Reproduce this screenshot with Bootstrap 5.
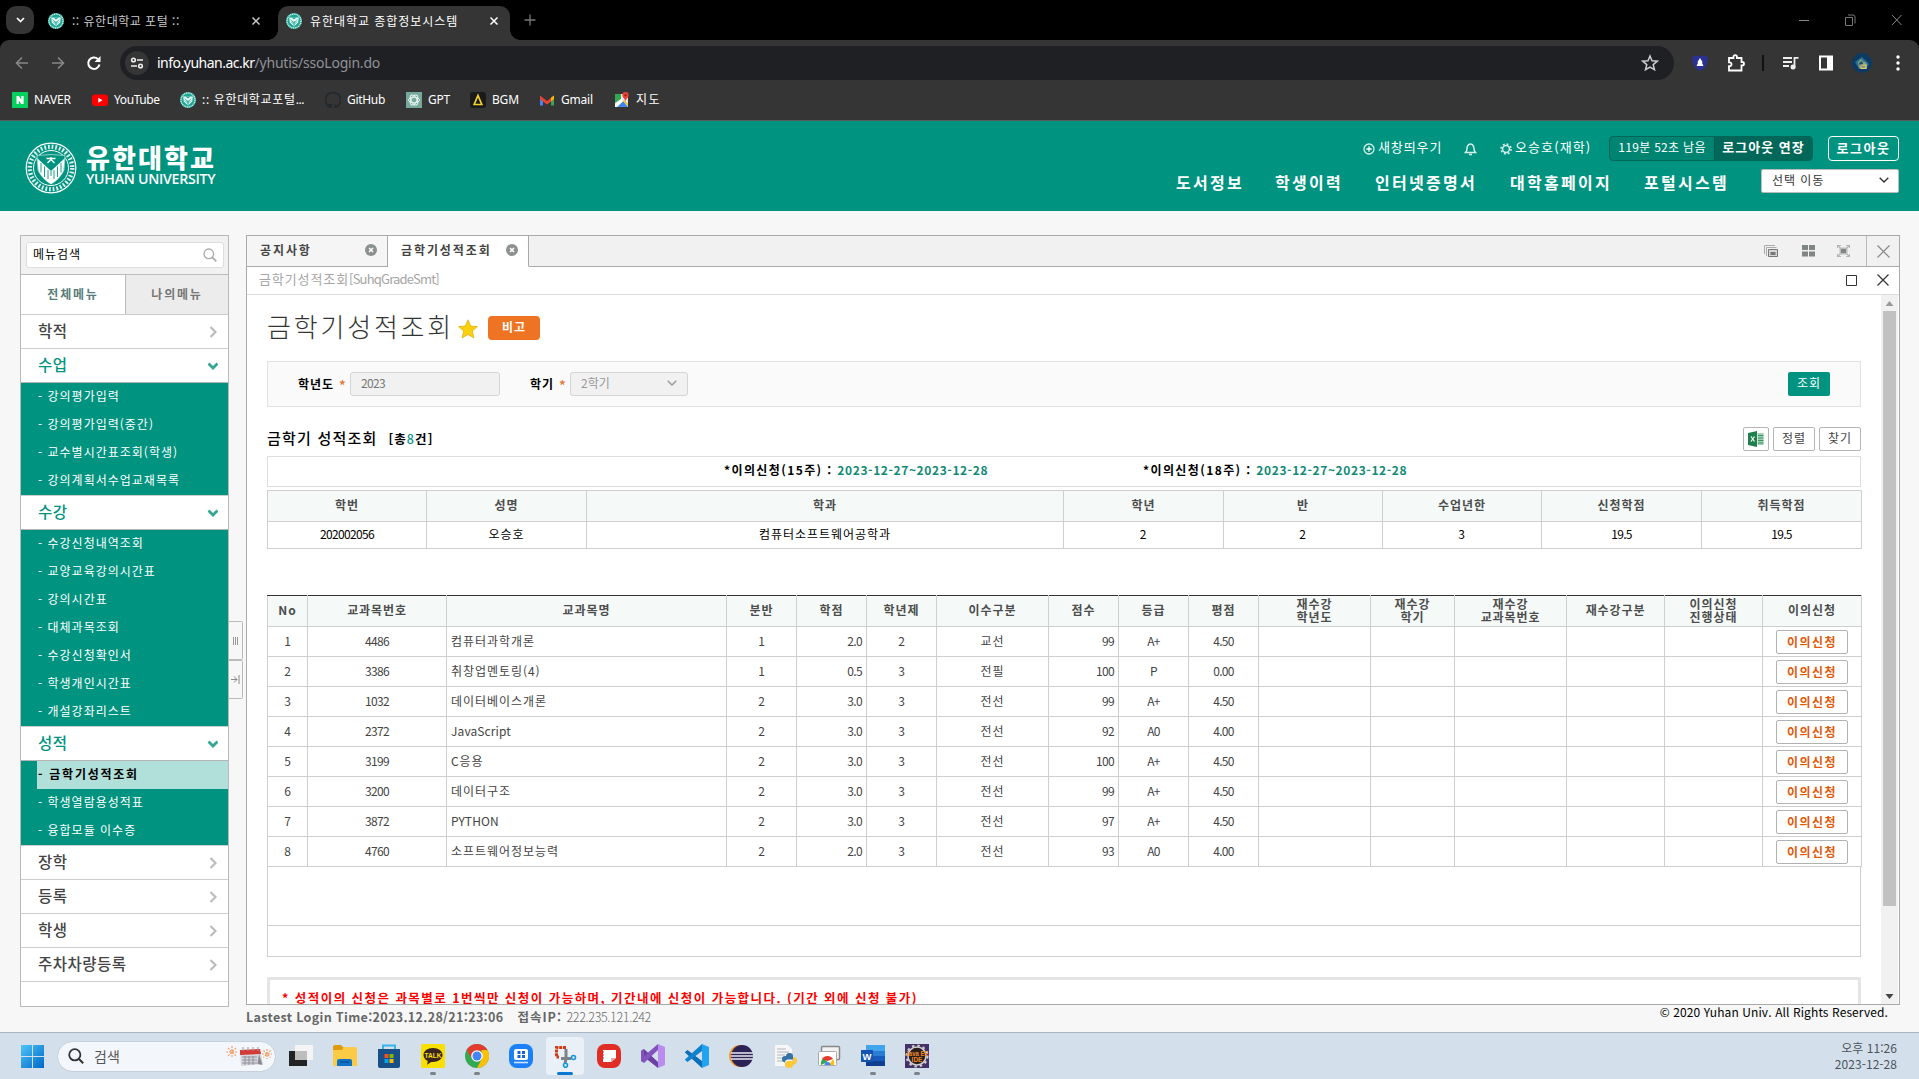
<!DOCTYPE html>
<html lang="ko">
<head>
<meta charset="utf-8">
<title>유한대학교 종합정보시스템</title>
<link href="https://cdn.jsdelivr.net/npm/bootstrap@5.3.0/dist/css/bootstrap.min.css" rel="stylesheet">
<style>
:root{--teal:#009380;--line:#cfcfcf;}
*{box-sizing:border-box}
body{width:1919px;height:1079px;overflow:hidden;background:#f7f7f7;font-family:"Noto Sans CJK KR",sans-serif;font-size:12px;line-height:1.2;color:#000;white-space:nowrap}
svg{display:block;flex:none}
.k{letter-spacing:.95px}
.n{letter-spacing:-.65px}
/* browser */
.tabstrip{height:40px;background:#000;color:#c9c9c9}
.tabmenu{width:28px;height:28px;border-radius:10px;background:#353535;margin:6px 14px 0 6px}
.btab{height:34px;margin-top:6px;padding:0 11px 4px 8px}
.btab .ttl{flex:1;margin-left:8px}
.btab-on{background:#353535;border-radius:10px 10px 0 0;color:#fff;position:relative}
.btab-on:before,.btab-on:after{content:"";position:absolute;bottom:0;width:10px;height:10px}
.btab-on:before{left:-10px;background:radial-gradient(circle at 0 0,#000 9.5px,#353535 10px)}
.btab-on:after{right:-10px;background:radial-gradient(circle at 100% 0,#000 9.5px,#353535 10px)}
.chrome-bg{background:#000}
.chrome-bars{background:#353535;height:81px;border-radius:9px 9px 0 0;border-bottom:1px solid #5c5c5c}
.toolbar{height:46px;padding-left:12px}
.omni{height:34px;border-radius:17px;background:#1f2024;width:1554px;padding:0 14px 0 5px;font-family:"Noto Sans",sans-serif;font-size:14px;letter-spacing:-.22px;color:#8f9296}
.omni b{font-weight:400;color:#fff;letter-spacing:-.5px}
.siteinfo{width:24px;height:24px;border-radius:50%;background:#353535;margin-right:8px}
.marks{height:28px;padding-left:12px;color:#fff;font-family:"Noto Sans","Noto Sans CJK KR",sans-serif}
.bm{gap:6px;letter-spacing:-.2px}
/* portal header */
.hd{height:90px;background:var(--teal);color:#fff}
.uni-ko{font-size:26px;font-weight:900;line-height:28px;letter-spacing:2.1px}
.uni-en{font:600 14.2px/16px "Open Sans",sans-serif;letter-spacing:-.3px}
.hd-top{height:25px;margin-top:15px}
.tmr{width:204px;height:25px;border:1px solid #00665a;border-radius:4px;background:#008472;overflow:hidden}
.tmr span:last-child{background:#006759;border-left:1px solid #005a4e}
.lgout{width:71px;height:25px;border:1px solid #fff;border-radius:4px;font-size:13px}
.gnb{font-size:16px;font-weight:700;letter-spacing:2.3px}
.gnb>span{padding-top:3px}
.hsel{width:138px;height:24px;background:#fff;border:1px solid #bbb;border-radius:2px;color:#333;padding:0 9px 2px 10px}
/* side menu */
.side{width:209px;height:772px;border:1px solid #b9b9b9;background:#fff}
.side-srch{height:39px;background:#f1f1f1;border-bottom:1px solid #bbb;padding:6px 4px 5px 5px}
.side-srch>div{height:26px;border:1px solid #ddd;border-radius:3px;background:#fff;padding:0 6px 1px 6px}
.side-tabs{height:39px;font-weight:600;color:#557d79}
.side-tabs>div{padding-bottom:1px}
.side-tabs>div+div{background:#ececec;border-left:1px solid #bbb;color:#777}
.mi{height:34px;border-top:1px solid #cdcdcd;padding:0 11px 3px 17px;font-size:15.5px;font-weight:500;color:#444;letter-spacing:.5px}
.mi svg{position:relative;top:2px}
.mi.op{height:35px;border-bottom:1px solid #b5b5b5;color:var(--teal);padding-right:10px}
.sub{background:var(--teal);color:#fff;padding-left:16px}
.sub div{height:28px;line-height:26px;padding-left:1px;letter-spacing:1px}
.sub .cur{background:#b1dfd9;color:#000;font-weight:700;letter-spacing:1.75px}
.hnd{width:14px;height:39px;border:1px solid #bbb;border-left:0;background:#f7f7f7;border-radius:0 2px 2px 0}
/* work area */
.work{width:1654px;height:770px;border:1px solid #aaa;background:#fff;overflow:hidden}
.wtabs{height:31px;background:#f1f1f1}
.wtab{height:31px;width:141px;border-right:1px solid #a9a9a9;border-bottom:1px solid #a9a9a9;padding:0 10px 2px 13px;background:#f5f5f5;font-weight:600;color:#444;letter-spacing:1.9px}
.wtab.on{background:#fff;border-bottom-color:#fff}
.wfill{border-bottom:1px solid #aaa;height:31px}
.crumb{height:28px;border-bottom:1px solid #ddd;color:#a5a5a5;font-size:13px;padding:0 10px 3px 12px}
.crumb svg{position:relative;top:1px}
.scr{width:17px;height:709px;background:#f1f1f1}
.scr .thumb{width:13px;height:595px;background:#c1c1c1;margin:0 auto}
.body{padding:0 20px 0 20px;width:1634px}
.ptitle{font-size:26px;font-weight:300;color:#333;letter-spacing:2.8px;line-height:30px;padding-bottom:2px}
.bigo{width:52px;height:24px;border-radius:4px;background:#ee7423;color:#fff;font-weight:700;letter-spacing:1px}
.filt{height:46px;border:1px solid #e2e2e2;background:#fafafa;padding:0 30px}
.fin{height:24px;border:1px solid #d5d5d5;border-radius:3px;background:#f1f1f1;color:#777;padding:0 10px 2px}
.req{color:#e8742c;font-size:14px;font-weight:500;margin:0 6px 0 5px;width:5px;padding-top:3px}
.go{width:42px;height:24px;background:var(--teal);color:#fff;border-radius:2px;padding-bottom:2px}
.sbtn{height:24px;width:42px;border:1px solid #b5b5b5;border-radius:2px;background:#fff;color:#444;padding-bottom:2px}
.per{height:31px;border:1px solid #ddd;font-weight:700;margin-top:5px;padding-bottom:2px;letter-spacing:1.4px}
.per i{font-style:normal;font-weight:600;color:#118a76;letter-spacing:.6px}
.grd{border-collapse:collapse;table-layout:fixed;width:1594px;text-align:center;color:#444;margin:0}
.grd th,.grd td{border:1px solid #cfcfcf;padding:0 4px 2px;vertical-align:middle}
.grd th{background:#f5faf9;font-weight:600;color:#4d4d4d;letter-spacing:.9px}
.g1{margin-top:3px}.g1 th{height:31px}.g1 td{height:27px;color:#000;letter-spacing:.95px}
.g1 .n{letter-spacing:-.65px}
.g2 th{height:31px;border-top:1px solid #333;line-height:13.5px;padding:0 0 2px}
.g2 td{height:30px;padding-bottom:1px}
.g2 .nm{text-align:left;letter-spacing:.95px;padding-left:4px}
.obj{width:72px;height:24px;border:1px solid #b2b2b2;border-radius:2px;color:#e05a0c;font-weight:600;letter-spacing:1.4px;margin:0 auto;background:#fff;position:relative;top:1px}
.rest{height:90px;border:1px solid #cfcfcf;border-top:0}
.rest>div{height:59px;border-bottom:1px solid #cfcfcf}
.warn{margin-top:20px;border:3px solid #e5e5e5;height:60px;color:#f00;font-weight:700;padding:10px 12px;font-size:12.5px;letter-spacing:1.46px}
.foot{padding:0 31px 0 246px;height:27px}
/* taskbar */
.task{height:47px;background:#d3e0ec;border-top:1px solid #a9b5c2;padding:0 22px 0 21px}
.pill{width:219px;height:31px;border-radius:16px;background:#f3f7fb;border:1px solid #c4d0dc;margin:0 6px 0 13px;padding:0 3px 0 10px;color:#555;font-size:14px}
.app{width:38px;height:38px;margin-right:6px;border-radius:4px;position:relative}
.app.on{background:#e9f0f7}
.app.run:after,.app.on:after{content:"";position:absolute;left:16px;bottom:0;width:6px;height:3px;border-radius:2px;background:#7b8187}
.app.on:after{left:11px;width:16px;background:#0878d4}
.clk{color:#4b5358;line-height:16.5px;text-align:right;font-size:12px;letter-spacing:.05px}
</style>
</head>
<body>
<svg width="0" height="0" style="position:absolute">
<symbol id="yh" viewBox="0 0 16 16"><circle cx="8" cy="8" r="8" fill="#1fa592"/><circle cx="8" cy="8" r="7" fill="none" stroke="#cfeeea" stroke-width="1.300" stroke-dasharray="1.200 .6"/><path d="M3.200 4.500h9.600l-.6 5L8 13.600 3.800 9.500z" fill="#eafaf7"/><path d="M5.500 4.500 8 6.500l2.500-2z" fill="#1fa592"/><path d="M8 8v5M4.800 6.500l3 3.500 3.400-3.500M5 8.500l3 3 3-3" stroke="#1fa592" fill="none" stroke-width=".8"/></symbol>
<symbol id="xx" viewBox="0 0 10 10"><path d="M1.500 1.500l7 7M8.500 1.500l-7 7" stroke="currentColor" stroke-width="1.500"/></symbol>
<symbol id="cx" viewBox="0 0 12 12"><circle cx="6" cy="6" r="6" fill="#8b918f"/><path d="M4 4l4 4M8 4L4 8" stroke="#fff" stroke-width="1.600"/></symbol>
<symbol id="gt" viewBox="0 0 8 12"><path d="M1.500 1l5 5-5 5" fill="none" stroke="#bcbcbc" stroke-width="2.200"/></symbol>
<symbol id="dn" viewBox="0 0 10 8"><path d="M.5 1.500 5 6l4.500-4.500" fill="none" stroke="#35a594" stroke-width="2.800"/></symbol>
<symbol id="cv" viewBox="0 0 10 6"><path d="M.7.700 5 5 9.300.700" fill="none" stroke="currentColor" stroke-width="1.400"/></symbol>
</svg>

<div class="tabstrip d-flex">
  <div class="tabmenu d-flex align-items-center justify-content-center text-white"><svg width="9" height="6"><path d="M1 1l3.500 3.500L8 1" fill="none" stroke="#fff" stroke-width="1.700"/></svg></div>
  <div class="btab d-flex align-items-center" style="width:230px;padding-left:0"><svg width="16" height="16"><use href="#yh"/></svg><span class="ttl" style="letter-spacing:.5px">:: 유한대학교 포털 ::</span><svg width="10" height="10" style="margin-right:6px"><use href="#xx"/></svg></div>
  <div class="btab btab-on d-flex align-items-center" style="width:232px"><svg width="16" height="16"><use href="#yh"/></svg><span class="ttl k">유한대학교 종합정보시스템</span><svg width="10" height="10"><use href="#xx"/></svg></div>
  <svg width="12" height="12" style="margin:14px 0 0 14px"><path d="M6 .5v11M.5 6h11" stroke="#777" stroke-width="1.300"/></svg>
  <div class="ms-auto d-flex" style="padding:14px 17px 0 0;gap:35px">
    <svg width="11" height="12"><path d="M0 6.500h10" stroke="#888"/></svg>
    <svg width="11" height="12"><path d="M.5 3.500h7v8h-7zM3 1h5q2 0 2 2v6.500" fill="none" stroke="#777"/></svg>
    <svg width="11" height="12"><path d="M1 1l9.500 10M10.500 1 1 11" stroke="#888"/></svg>
  </div>
</div>
<div class="chrome-bg"><div class="chrome-bars">
  <div class="toolbar d-flex align-items-center">
    <svg width="20" height="20"><path d="M16 10H5M10 4.500 4.500 10l5.500 5.500" fill="none" stroke="#888" stroke-width="1.600"/></svg>
    <svg width="20" height="20" style="margin-left:16px"><path d="M4 10h11M10 4.500l5.500 5.500-5.500 5.500" fill="none" stroke="#888" stroke-width="1.600"/></svg>
    <svg width="20" height="20" style="margin:0 16px"><path d="M15.500 11.500A5.700 5.700 0 1 1 13.800 6" fill="none" stroke="#fff" stroke-width="2"/><path d="M16.500 3v6h-6z" fill="#fff"/></svg>
    <div class="omni d-flex align-items-center">
      <span class="siteinfo d-flex align-items-center justify-content-center"><svg width="14" height="12"><g fill="none" stroke="#eee" stroke-width="1.600"><circle cx="3.500" cy="3" r="1.800"/><path d="M7 3h6M1 9h6"/><circle cx="10.500" cy="9" r="1.800"/></g></svg></span>
      <span><b>info.yuhan.ac.kr</b>/yhutis/ssoLogin.do</span>
      <svg class="ms-auto" width="18" height="18" style="margin-right:1px"><path d="M9 2l2 4.800 5.200.4-4 3.400 1.300 5.100L9 13l-4.500 2.700 1.300-5.100-4-3.400L7 6.800z" fill="none" stroke="#ccc" stroke-width="1.500"/></svg>
    </div>
    <div class="d-flex align-items-center" style="margin-left:17px">
      <svg width="18" height="16"><path d="M1 2q8-3 16 0 0 10-8 14Q1 12 1 2z" fill="#2a3193"/><path d="M9 3l2.500 4-.5 1 1.500 3h-7L7 8l-.5-1z" fill="#fff"/></svg>
      <svg width="20" height="20" style="margin-left:17px"><path d="M3 5h4.500V3.800a1.700 1.700 0 0 1 3.400 0V5H15.500v4h.8a1.700 1.700 0 0 1 0 3.400h-.8V17.500H3v-4.300h.6a1.900 1.900 0 0 0 0-3.800H3z" fill="none" stroke="#fff" stroke-width="1.800"/></svg>
      <span style="width:2px;height:16px;background:#111;margin:0 18px 0 16px"></span>
      <svg width="18" height="16"><path d="M1 3h9M1 7h9M1 11h6" stroke="#eee" stroke-width="1.800"/><path d="M12.500 12.500V2.800h4" stroke="#eee" stroke-width="1.800" fill="none"/><circle cx="11" cy="12" r="2.500" fill="#eee"/></svg>
      <svg width="16" height="16" style="margin-left:18px"><path d="M2 1.500h12v13H2z" fill="none" stroke="#fff" stroke-width="2"/><path d="M9 1h5v14H9z" fill="#fff"/></svg>
      <svg width="20" height="20" style="margin-left:18px"><circle cx="10" cy="10" r="10" fill="#0d3a63"/><path d="M3 9l4-3 3-2 4 4 3 3-3 5H7z" fill="#2b6f92"/><path d="M6 9l3-3 3 3 2 0 1 6H7z" fill="#7fa07a"/><path d="M7 10l3-2 1 3-2 4z" fill="#1c4e73"/><path d="M9 12h5v3.500H9z" fill="none" stroke="#e6ca74" stroke-width="1.200"/></svg>
      <svg width="4" height="16" style="margin-left:24px"><circle cx="2" cy="2" r="1.700" fill="#fff"/><circle cx="2" cy="8" r="1.700" fill="#fff"/><circle cx="2" cy="14" r="1.700" fill="#fff"/></svg>
    </div>
  </div>
  <div class="marks d-flex align-items-center">
    <div class="bm d-flex align-items-center" style="width:80px"><svg width="16" height="16"><path d="M0 0h16v16H0z" fill="#04d15c"/><path d="M4.500 12V4h2.300l2.500 3.800V4h2.300v8H9.300L6.800 8.200V12z" fill="#fff"/></svg>NAVER</div>
    <div class="bm d-flex align-items-center" style="width:88px;letter-spacing:-.4px"><svg width="16" height="16"><rect y="2.500" width="16" height="11.500" rx="3" fill="#f00"/><path d="M6.300 5.800v5l4.200-2.500z" fill="#fff"/></svg>YouTube</div>
    <div class="bm d-flex align-items-center" style="width:145px;letter-spacing:.7px"><svg width="16" height="16"><use href="#yh"/></svg><span>:: 유한대학교포털<span style="letter-spacing:-.5px">...</span></span></div>
    <div class="bm d-flex align-items-center" style="width:81px;letter-spacing:-.3px"><svg width="16" height="16"><path d="M8 .6a7.500 7.500 0 0 0-2.500 14.600c.4 0 .5-.2.500-.5v-1.600C3.500 13.500 3.200 12 3.200 12M8 .6a7.500 7.500 0 0 1 2.500 14.600c-.4 0-.5-.2-.5-.5v-2.300" fill="none" stroke="#24292e" stroke-width="2"/></svg>GitHub</div>
    <div class="bm d-flex align-items-center" style="width:64px"><svg width="16" height="16"><path d="M0 0h16v16H0z" fill="#74a99b"/><g fill="none" stroke="#e9f3f0" stroke-width="1"><ellipse cx="8" cy="8" rx="5.500" ry="2.800"/><ellipse cx="8" cy="8" rx="5.500" ry="2.800" transform="rotate(60 8 8)"/><ellipse cx="8" cy="8" rx="5.500" ry="2.800" transform="rotate(120 8 8)"/></g></svg>GPT</div>
    <div class="bm d-flex align-items-center" style="width:69px"><svg width="16" height="16"><rect width="16" height="16" rx="3" fill="#1a1a1a"/><path d="M8 3.500l3.800 9H4.200z" fill="none" stroke="#f2d027" stroke-width="1.700"/></svg>BGM</div>
    <div class="bm d-flex align-items-center" style="width:75px"><svg width="16" height="16"><path d="M1 4v9.500h3V7z" fill="#4285f4"/><path d="M15 4v9.500h-3V7z" fill="#34a853"/><path d="M1 3.500 8 9l7-5.500v3.800L8 12.600 1 7.300z" fill="#ea4335"/><path d="M12 5.800l3-2.300v3.500l-3 2.300z" fill="#fbbc04"/></svg>Gmail</div>
    <div class="bm d-flex align-items-center" style="letter-spacing:1.400px"><svg width="16" height="16"><path d="M1 2h13v13H1z" fill="#e8eaed"/><path d="M1 2h6v5L1 11z" fill="#34a853"/><path d="M3 15 9 9l5 6z" fill="#4285f4"/><path d="M1 13l6-6 2 2-6 6H1z" fill="#fff"/><path d="M10 8l4 4v2L9 9z" fill="#fbbc04"/><path d="M11.500 0a3.200 3.200 0 0 0-3.200 3.300c0 2.200 2.200 3 3.200 6 1-3 3.200-3.800 3.200-6A3.200 3.200 0 0 0 11.500 0z" fill="#ea4335"/><circle cx="11.500" cy="3.300" r="1.100" fill="#8c1d18"/></svg>지도</div>
  </div>
</div></div>

<header class="hd d-flex">
  <svg width="52" height="52" viewBox="0 0 52 52" style="margin:21px 9px 0 25px"><circle cx="26" cy="26" r="24.800" fill="none" stroke="#fff" stroke-width="1.200"/><circle cx="26" cy="26" r="17.500" fill="none" stroke="#fff"/><circle cx="26" cy="26" r="21.200" fill="none" stroke="#d9f0ed" stroke-width="4.400" stroke-dasharray="1.800 1.900"/><path d="M12 13.500q14-2 28 0l-1 14.500q-4 9-13 14-9-5-13-14z" fill="#009380" stroke="#cdebe7" stroke-width=".7"/><path d="M12.500 16.500 26 29l13.500-12.500-1 12.500q-5 9-12.500 13-7.500-4-12.500-13z" fill="#fff"/><path d="M26 29v5M16 21v9.500M19.500 24.500V35M23 28v9M29 28v9M32.500 24.500V35M36 21v9.500" stroke="#009380" stroke-width=".9"/><path d="M21.500 16.500h9M26 15v2.500l-3.500 3.500M26 17.500l3.500 3.500" stroke="#fff" stroke-width="1.300" fill="none"/></svg>
  <div style="padding-top:22px"><div class="uni-ko">유한대학교</div><div class="uni-en">YUHAN UNIVERSITY</div></div>
  <div class="ms-auto" style="padding-right:20px">
    <div class="hd-top d-flex align-items-center justify-content-end">
      <svg width="12" height="12"><circle cx="6" cy="6" r="5" fill="none" stroke="#d5efeb" stroke-width="1.300"/><path d="M6 3.300v5.400M3.300 6h5.400" stroke="#fff" stroke-width="1.300"/></svg><span style="width:89px;padding:0 0 3px 3px;font-size:13px;letter-spacing:.9px">새창띄우기</span>
      <svg width="13" height="14" style="margin-right:23px"><path d="M1.500 10.500h10Q10 9 10 6.500T8.300 2.600q-1.800-1.400-3.600 0T3 6.500 1.500 10.500zM5 12.500h3" fill="none" stroke="#d5efeb" stroke-width="1.500"/></svg>
      <svg width="12" height="12"><circle cx="6" cy="6" r="3.400" fill="none" stroke="#d5efeb" stroke-width="1.500"/><circle cx="6" cy="6" r="5" fill="none" stroke="#d5efeb" stroke-width="1.600" stroke-dasharray="1.900 2.030"/></svg><span style="width:97px;padding:0 0 3px 3px;font-size:13px;letter-spacing:1.100px">오승호(재학)</span>
      <div class="tmr d-flex"><span class="d-flex align-items-center justify-content-center" style="width:104px;letter-spacing:.3px;padding-bottom:2px">119분 52초 남음</span><span class="d-flex align-items-center justify-content-center flex-fill fw-bold" style="font-size:13px;letter-spacing:1px;padding-bottom:3px">로그아웃 연장</span></div>
      <div class="lgout d-flex align-items-center justify-content-center fw-bold" style="margin-left:15px;letter-spacing:1.500px;padding-bottom:2px">로그아웃</div>
    </div>
    <div class="d-flex align-items-center gnb" style="margin-top:8px;height:24px">
      <span style="width:99px">도서정보</span><span style="width:100px">학생이력</span><span style="width:135px">인터넷증명서</span><span style="width:134px">대학홈페이지</span><span style="width:117px">포털시스템</span>
      <div class="hsel d-flex align-items-center justify-content-between fw-normal k" style="font-size:12px"><div>선택 이동</div><svg width="10" height="6"><use href="#cv"/></svg></div>
    </div>
  </div>
</header>

<main class="d-flex" style="padding:24px 0 0 20px;height:794px">
  <nav class="side">
    <div class="side-srch"><div class="d-flex align-items-center justify-content-between k"><span>메뉴검색</span><svg width="14" height="14"><circle cx="5.800" cy="5.800" r="4.800" fill="none" stroke="#aaa" stroke-width="1.300"/><path d="M9.300 9.300l4 4" stroke="#aaa" stroke-width="1.800"/></svg></div></div>
    <div class="side-tabs d-flex" style="letter-spacing:1.800px"><div class="d-flex align-items-center justify-content-center" style="width:104px">전체메뉴</div><div class="d-flex align-items-center justify-content-center flex-fill">나의메뉴</div></div>
    <div class="mi d-flex align-items-center justify-content-between">학적<svg width="8" height="12"><use href="#gt"/></svg></div>
    <div class="mi op d-flex align-items-center justify-content-between">수업<svg width="10" height="8"><use href="#dn"/></svg></div>
    <div class="sub"><div>- 강의평가입력</div><div>- 강의평가입력(중간)</div><div>- 교수별시간표조회(학생)</div><div>- 강의계획서수업교재목록</div></div>
    <div class="mi op d-flex align-items-center justify-content-between">수강<svg width="10" height="8"><use href="#dn"/></svg></div>
    <div class="sub"><div>- 수강신청내역조회</div><div>- 교양교육강의시간표</div><div>- 강의시간표</div><div>- 대체과목조회</div><div>- 수강신청확인서</div><div>- 학생개인시간표</div><div>- 개설강좌리스트</div></div>
    <div class="mi op d-flex align-items-center justify-content-between">성적<svg width="10" height="8"><use href="#dn"/></svg></div>
    <div class="sub"><div class="cur">- 금학기성적조회</div><div>- 학생열람용성적표</div><div>- 융합모듈 이수증</div></div>
    <div class="mi d-flex align-items-center justify-content-between">장학<svg width="8" height="12"><use href="#gt"/></svg></div>
    <div class="mi d-flex align-items-center justify-content-between">등록<svg width="8" height="12"><use href="#gt"/></svg></div>
    <div class="mi d-flex align-items-center justify-content-between">학생<svg width="8" height="12"><use href="#gt"/></svg></div>
    <div class="mi d-flex align-items-center justify-content-between">주차차량등록<svg width="8" height="12"><use href="#gt"/></svg></div>
    <div class="mi"></div>
  </nav>
  <div style="width:17px;padding-top:386px">
    <div class="hnd d-flex align-items-center justify-content-center"><svg width="6" height="8"><path d="M.5 0v8M2.500 0v8M4.500 0v8" stroke="#999"/></svg></div>
    <div class="hnd d-flex align-items-center justify-content-center"><svg width="9" height="9"><path d="M0 4.500h6M3 1.500l3 3-3 3M8 0v9" fill="none" stroke="#888"/></svg></div>
  </div>
  <section class="work">
    <div class="wtabs d-flex">
      <div class="wtab d-flex align-items-center justify-content-between">공지사항<svg width="12" height="12"><use href="#cx"/></svg></div>
      <div class="wtab on d-flex align-items-center justify-content-between">금학기성적조회<svg width="12" height="12"><use href="#cx"/></svg></div>
      <div class="wfill flex-fill d-flex align-items-center justify-content-end">
        <svg width="15" height="13"><path d="M.5 9V.5H11M2.500 11V2.500H12.500" fill="none" stroke="#aaa"/><path d="M4.500 4.500h9v7h-9z" fill="#d5d5d5" stroke="#777"/><path d="M6.500 7h5v3h-5z" fill="#777"/></svg>
        <svg width="13" height="12" style="margin:0 22px 0 23px"><path d="M0 0h6v5H0zM7 0h6v5H7zM0 6.500h6v5H0zM7 6.500h6v5H7z" fill="#808684"/></svg>
        <svg width="13" height="12"><path d="M.5 3V.5H4M9 .5h3.500V3M.5 9v2.500H4M9 11.500h3.500V9" fill="none" stroke="#b5b5b5"/><path d="M0 0l13 12M13 0 0 12" stroke="#b0b0b0" stroke-width="1.200"/><path d="M2.500 2.500h8v7h-8z" fill="#bdbdbd"/><path d="M4 4h5v4H4z" fill="#808684"/></svg>
        <div class="d-flex align-items-center justify-content-center" style="width:33px;height:30px;border-left:1px solid #bbb;margin-left:16px"><svg width="13" height="13"><path d="M.5.500l12 12M12.500.500l-12 12" stroke="#888" stroke-width="1.200"/></svg></div>
      </div>
    </div>
    <div class="crumb d-flex align-items-center"><span style="letter-spacing:.9px">금학기성적조회</span><span style="letter-spacing:-.8px">[SuhqGradeSmt]</span>
      <svg class="ms-auto" width="11" height="11" style="margin-right:20px"><path d="M.5.500h10v10H.5z" fill="none" stroke="#333"/></svg><svg width="12" height="12"><path d="M.5.500l11 11M11.500.500l-11 11" stroke="#333" stroke-width="1.200"/></svg></div>
    <div class="d-flex">
      <div class="body">
        <div class="d-flex align-items-center" style="height:66px;padding-bottom:2px">
          <span class="ptitle">금학기성적조회</span>
          <svg width="20" height="20" viewBox="0 0 20 20" style="margin:3px 10px 0 4px"><path d="M10 .8l2.700 6.200 6.700.6-5 4.500 1.500 6.900L10 15.500 4.100 19l1.500-6.900-5-4.500L7.300 7z" fill="#f9cf10" stroke="#e3b50d" stroke-width=".8"/></svg>
          <span class="bigo d-flex align-items-center justify-content-center" style="margin-top:2px;padding-bottom:1px">비고</span>
        </div>
        <div class="filt d-flex align-items-center">
          <b class="k">학년도</b><span class="req">*</span><div class="fin d-flex align-items-center n" style="width:150px">2023</div>
          <b class="k" style="margin-left:30px">학기</b><span class="req">*</span><div class="fin d-flex align-items-center justify-content-between" style="width:118px;color:#999">2학기<svg width="10" height="6"><use href="#cv"/></svg></div>
          <div class="go d-flex align-items-center justify-content-center ms-auto k">조회</div>
        </div>
        <div class="d-flex align-items-center" style="margin-top:20px;height:24px;gap:4px">
          <span style="font-size:15px;font-weight:500;letter-spacing:1.200px;padding-bottom:2px">금학기 성적조회</span><b style="font-size:12.500px;margin-left:7px;letter-spacing:1.100px;padding-bottom:2px">[총<span style="color:var(--teal);font-weight:500">8</span>건]</b>
          <div class="sbtn d-flex align-items-center justify-content-center ms-auto pb-0" style="width:26px"><svg width="16" height="16"><path d="M0 2l9-2v16l-9-2z" fill="#1f7f4d"/><path d="M9.500 2h6v12h-6z" fill="#9fceb2"/><path d="M10 4.500h5.500M10 7h5.500M10 9.500h5.500M10 12h5.500" stroke="#3d9465"/><path d="M3 5.500l3.500 5M6.500 5.500 3 10.500" stroke="#fff" stroke-width="1.200"/></svg></div>
          <div class="sbtn d-flex align-items-center justify-content-center k">정렬</div><div class="sbtn d-flex align-items-center justify-content-center k">찾기</div>
        </div>
        <div class="per d-flex align-items-center"><span style="width:419px;margin-left:456px">*이의신청(15주) : <i>2023-12-27~2023-12-28</i></span><span>*이의신청(18주) : <i>2023-12-27~2023-12-28</i></span></div>
        <table class="grd g1"><colgroup><col style="width:159px"><col style="width:160px"><col style="width:477px"><col style="width:160px"><col style="width:159px"><col style="width:159px"><col style="width:160px"><col style="width:160px"></colgroup>
          <tr><th>학번</th><th>성명</th><th>학과</th><th>학년</th><th>반</th><th>수업년한</th><th>신청학점</th><th>취득학점</th></tr>
          <tr><td class="n">202002056</td><td>오승호</td><td>컴퓨터소프트웨어공학과</td><td>2</td><td>2</td><td>3</td><td class="n">19.5</td><td class="n">19.5</td></tr>
        </table>
        <div style="height:46px"></div>
        <table class="grd g2"><colgroup id="cols"></colgroup><thead><tr><th>No</th><th>교과목번호</th><th>교과목명</th><th>분반</th><th>학점</th><th>학년제</th><th>이수구분</th><th>점수</th><th>등급</th><th>평점</th><th>재수강<br>학년도</th><th>재수강<br>학기</th><th>재수강<br>교과목번호</th><th>재수강구분</th><th>이의신청<br>진행상태</th><th>이의신청</th></tr></thead><tbody id="rows"></tbody></table>
        <div class="rest"><div></div></div>
        <div class="warn">* 성적이의 신청은 과목별로 1번씩만 신청이 가능하며, 기간내에 신청이 가능합니다. (기간 외에 신청 불가)</div>
      </div>
      <div class="scr"><svg width="17" height="16"><path d="M4.500 11h8l-4-5z" fill="#999"/></svg><div class="thumb"></div><svg width="17" height="16" style="margin-top:82px"><path d="M4.500 6h8l-4 5z" fill="#444"/></svg></div>
    </div>
  </section>
</main>
<footer class="foot d-flex justify-content-between">
  <div style="color:#666;font-weight:700;font-size:12.500px;padding-top:4px"><span style="letter-spacing:.34px">Lastest Login Time:2023.12.28/21:23:06</span><span style="margin-left:14px;letter-spacing:1px">접속IP:</span> <span class="fw-light" style="margin-left:1px;letter-spacing:-.35px">222.235.121.242</span></div>
  <div style="letter-spacing:.1px">© 2020 Yuhan Univ. All Rights Reserved.</div>
</footer>

<div class="task d-flex align-items-center">
  <svg width="23" height="23"><defs><linearGradient id="w" x2="1" y2="1"><stop stop-color="#4cc6f7"/><stop offset="1" stop-color="#0067c8"/></linearGradient></defs><path d="M0 0h11v11H0zM12 0h11v11H12zM0 12h11v11H0zM12 12h11v11H12z" fill="url(#w)"/></svg>
  <div class="pill d-flex align-items-center"><svg width="16" height="16"><circle cx="6.800" cy="6.800" r="5.600" fill="none" stroke="#333" stroke-width="1.800"/><path d="M11 11l4.200 4.200" stroke="#333" stroke-width="2"/></svg><span style="margin-left:10px">검색</span>
    <svg class="ms-auto" width="46" height="24"><g stroke="#f0a069" stroke-width="1.200" stroke-dasharray="2 1"><path d="M6 2v12M0 8h12M2 4l8 8M10 4l-8 8M41 5v10M36 10h10M37.500 6.500l7 7M44.500 6.500l-7 7"/></g><path d="M14 6l20-1 3 15-22 2z" fill="#d6d6dc"/><path d="M14 6l20-1 1 5-21 1z" fill="#d53a3a"/><path d="M33 10l3.500 11-5-1z" fill="#8a8a93"/><path d="M16 13h15M16 16h15M16 19h15M19 12v9M23 12v9M27 12v9" stroke="#85858f" stroke-width=".8"/><path d="M17 7V3M22 7V3M27 7V3M32 7V3" stroke="#999"/></svg></div>
  <div class="app d-flex align-items-center justify-content-center"><svg width="24" height="24"><path d="M0 7h18v15H0z" fill="#222"/><path d="M6 1h18v15H6z" fill="#f4f4f4"/><path d="M6 7h12v9H6z" fill="#bdbdbd"/></svg></div>
  <div class="app d-flex align-items-center justify-content-center"><svg width="24" height="24"><path d="M0 3q0-2 2-2h6l3 3v4H0z" fill="#dd9b0d"/><path d="M0 6h9l2-3h11q2 0 2 2v17H0z" fill="#fccb45"/><path d="M4 22v-5q0-2 2-2h11q2 0 2 2v5z" fill="#1072c5"/><path d="M7 18h9" stroke="#0a559c" stroke-width="1.500"/></svg></div>
  <div class="app d-flex align-items-center justify-content-center"><svg width="24" height="24"><path d="M6 7V1.500h12V7" fill="none" stroke="#35b4ee" stroke-width="2"/><path d="M1 5h22v17q0 2-2 2H3q-2 0-2-2z" fill="#184f86"/><path d="M7.500 10h4v4h-4z" fill="#f25022"/><path d="M12.500 10h4v4h-4z" fill="#7fba00"/><path d="M7.500 15h4v4h-4z" fill="#00a4ef"/><path d="M12.500 15h4v4h-4z" fill="#ffb900"/></svg></div>
  <div class="app run d-flex align-items-center justify-content-center"><svg width="24" height="24"><rect width="24" height="24" rx="2" fill="#f9e000"/><path d="M12 4c-5.500 0-9.500 3-9.500 7 0 2.600 1.700 4.700 4.300 6l-.8 3.800 4.200-2.900c6 .7 11.300-2.400 11.300-6.900 0-4-4-7-9.500-7z" fill="#3b2420"/><text x="12" y="13.600" font-size="6.500" font-weight="700" text-anchor="middle" fill="#f9e000" font-family="Liberation Sans">TALK</text></svg></div>
  <div class="app run d-flex align-items-center justify-content-center"><svg width="24" height="24"><circle cx="12" cy="12" r="12" fill="#34a853"/><path d="M1.600 6a12 12 0 0 1 20.800 0L12 7z" fill="#e33b2e"/><path d="M22.400 6A12 12 0 0 1 12 24l5-9.500L16.500 6z" fill="#fbbf0a"/><path d="M1.600 6l5.600 9L12 7z" fill="#e33b2e"/><circle cx="12" cy="12" r="5.800" fill="#fff"/><circle cx="12" cy="12" r="4.500" fill="#4285f4"/></svg></div>
  <div class="app d-flex align-items-center justify-content-center"><svg width="24" height="24"><rect width="24" height="24" rx="8" fill="#1a80f8"/><rect x="5" y="5" width="14" height="11" rx="2" fill="#fff"/><path d="M8.500 7h3v3h-3zM13 7h3v3h-3zM8.500 11h3v3h-3zM13 11h3v3h-3z" fill="#1a60d8"/><path d="M5 18.500h14" stroke="#cfe4ff" stroke-width="1.600"/></svg></div>
  <div class="app on d-flex align-items-center justify-content-center"><svg width="24" height="24"><path d="M13 3.500H3.500V13H6" fill="none" stroke="#d43b12" stroke-width="3" stroke-dasharray="3 .8"/><path d="M13 5v10l-1 4M8 14.500h10" fill="none" stroke="#7d8288" stroke-width="3"/><circle cx="20.500" cy="13.500" r="2" fill="none" stroke="#1496dd" stroke-width="1.600"/><circle cx="12.500" cy="21.300" r="2" fill="none" stroke="#1496dd" stroke-width="1.600"/></svg></div>
  <div class="app d-flex align-items-center justify-content-center"><svg width="24" height="24"><rect width="24" height="24" rx="8" fill="#e02d26"/><path d="M6 6h13v8l-5 4H6z" fill="#fff"/><path d="M19 14h-5v4z" fill="#f0a7a3"/><path d="M5 8h2M5 11h2M5 14h2" stroke="#e02d26"/></svg></div>
  <div class="app d-flex align-items-center justify-content-center"><svg width="24" height="24"><path d="M0 7l3-2 14 13v6L3 13v5l-3-1z" fill="#6a41a0"/><path d="M0 17l3 2L17 6V0L3 12V5L0 7z" fill="#8252bd"/><path d="M17 0l7 3v18l-7 3z" fill="#bb8bf0"/></svg></div>
  <div class="app d-flex align-items-center justify-content-center"><svg width="24" height="24"><path d="M0 8l2.500-2L17 17v7L0 8.500z" fill="#0a6fb8"/><path d="M0 16l2.500 2L17 7V0L0 15.500z" fill="#1081cf"/><path d="M17 0l7 3v18l-7 3z" fill="#23a3ef"/></svg></div>
  <div class="app d-flex align-items-center justify-content-center"><svg width="24" height="24"><ellipse cx="11" cy="12" rx="11" ry="11" fill="#f19d2c"/><ellipse cx="13" cy="12" rx="11" ry="11" fill="#2c2255"/><path d="M2 9h22M2 12h22M2 15h22" stroke="#e8e6f2" stroke-width="1.300"/></svg></div>
  <div class="app d-flex align-items-center justify-content-center"><svg width="24" height="24"><path d="M2 1h13l4 4v17H2z" fill="#f6f6f6"/><path d="M4 5h9M4 8h12M4 11h8M4 14h6M4 17h6" stroke="#b0b5ba"/><path d="M13 12q0-3 3.500-3t3.500 3v3.500h-5q-3 0-3 3-3-.5-3-3.500t3-3z" fill="#3572a5"/><path d="M12 20q0-3 3-3h5v-4q4 0 4 3.500T20 21q0 3-3.500 3T12 22z" fill="#fcc735"/></svg></div>
  <div class="app d-flex align-items-center justify-content-center"><svg width="24" height="24"><rect x="4.500" y="2.500" width="18" height="13" rx="1" fill="#f2f2f2" stroke="#888" stroke-width="1.500"/><rect x="1.500" y="7.500" width="18" height="14" rx="1" fill="#fff" stroke="#aaa" stroke-width="1"/><path d="M4 21a6.500 6.500 0 0 1 3-7l3.500 4z" fill="#34a853"/><path d="M5 15a6.500 6.500 0 0 1 11 0l-5.500 2z" fill="#e33b2e"/><path d="M16 15q2 3 1 6h-5z" fill="#fbbf0a"/><path d="M7.500 21a3 3 0 0 1 6 0z" fill="#4285f4"/></svg></div>
  <div class="app run d-flex align-items-center justify-content-center"><svg width="24" height="24"><path d="M5 1h19v6H5z" fill="#41a5ee"/><path d="M5 7h19v5H5z" fill="#2b7cd3"/><path d="M5 12h19v5H5z" fill="#185abd"/><path d="M5 17h19v5H5z" fill="#103f91"/><path d="M0 6h12v12H0z" fill="#1554b3"/><text x="6" y="15.500" font-size="9.500" font-weight="700" text-anchor="middle" fill="#fff" font-family="Liberation Sans">W</text></svg></div>
  <div class="app run d-flex align-items-center justify-content-center"><svg width="24" height="24"><path d="M0 0h24v24H0z" fill="#453068"/><circle cx="12" cy="12" r="9" fill="#2a1d1b" stroke="#cfcfcf" stroke-width="1.500"/><circle cx="12" cy="12" r="10.500" fill="none" stroke="#cfcfcf" stroke-width="2" stroke-dasharray="2.500 3"/><text x="12" y="11.500" font-size="6.500" font-weight="700" text-anchor="middle" fill="#f08a24" font-family="Liberation Sans" textLength="23" lengthAdjust="spacingAndGlyphs">Java EE</text><text x="12" y="18" font-size="6.500" font-weight="700" text-anchor="middle" fill="#f08a24" font-family="Liberation Sans">IDE</text></svg></div>
  <div class="ms-auto clk">오후 11:26<br>2023-12-28</div>
</div>
<script>
// column widths of the grade grid, in pixels
document.getElementById('cols').innerHTML=[40,139,280,70,70,70,112,70,70,70,112,84,112,98,98,99].map(w=>`<col style="width:${w}px">`).join('');
const grades=[
['4486','컴퓨터과학개론',1,'2.0',2,'교선',99,'A+','4.50'],
['3386','취창업멘토링(4)',1,'0.5',3,'전필',100,'P','0.00'],
['1032','데이터베이스개론',2,'3.0',3,'전선',99,'A+','4.50'],
['2372','JavaScript',2,'3.0',3,'전선',92,'A0','4.00'],
['3199','C응용',2,'3.0',3,'전선',100,'A+','4.50'],
['3200','데이터구조',2,'3.0',3,'전선',99,'A+','4.50'],
['3872','PYTHON',2,'3.0',3,'전선',97,'A+','4.50'],
['4760','소프트웨어정보능력',2,'2.0',3,'전선',93,'A0','4.00']];
document.getElementById('rows').innerHTML=grades.map((g,i)=>`<tr><td>${i+1}</td><td class="n">${g[0]}</td><td class="nm"${/^[A-Z]{2}|^J/.test(g[1])?' style="letter-spacing:.1px"':''}>${g[1]}</td><td>${g[2]}</td><td class="n text-end">${g[3]}</td><td>${g[4]}</td><td class="k">${g[5]}</td><td class="n text-end">${g[6]}</td><td class="n">${g[7]}</td><td class="n">${g[8]}</td><td></td><td></td><td></td><td></td><td></td><td><div class="obj d-flex align-items-center justify-content-center">이의신청</div></td></tr>`).join('');
</script>
<script src="https://cdn.jsdelivr.net/npm/bootstrap@5.3.0/dist/js/bootstrap.bundle.min.js"></script>
</body>
</html>
